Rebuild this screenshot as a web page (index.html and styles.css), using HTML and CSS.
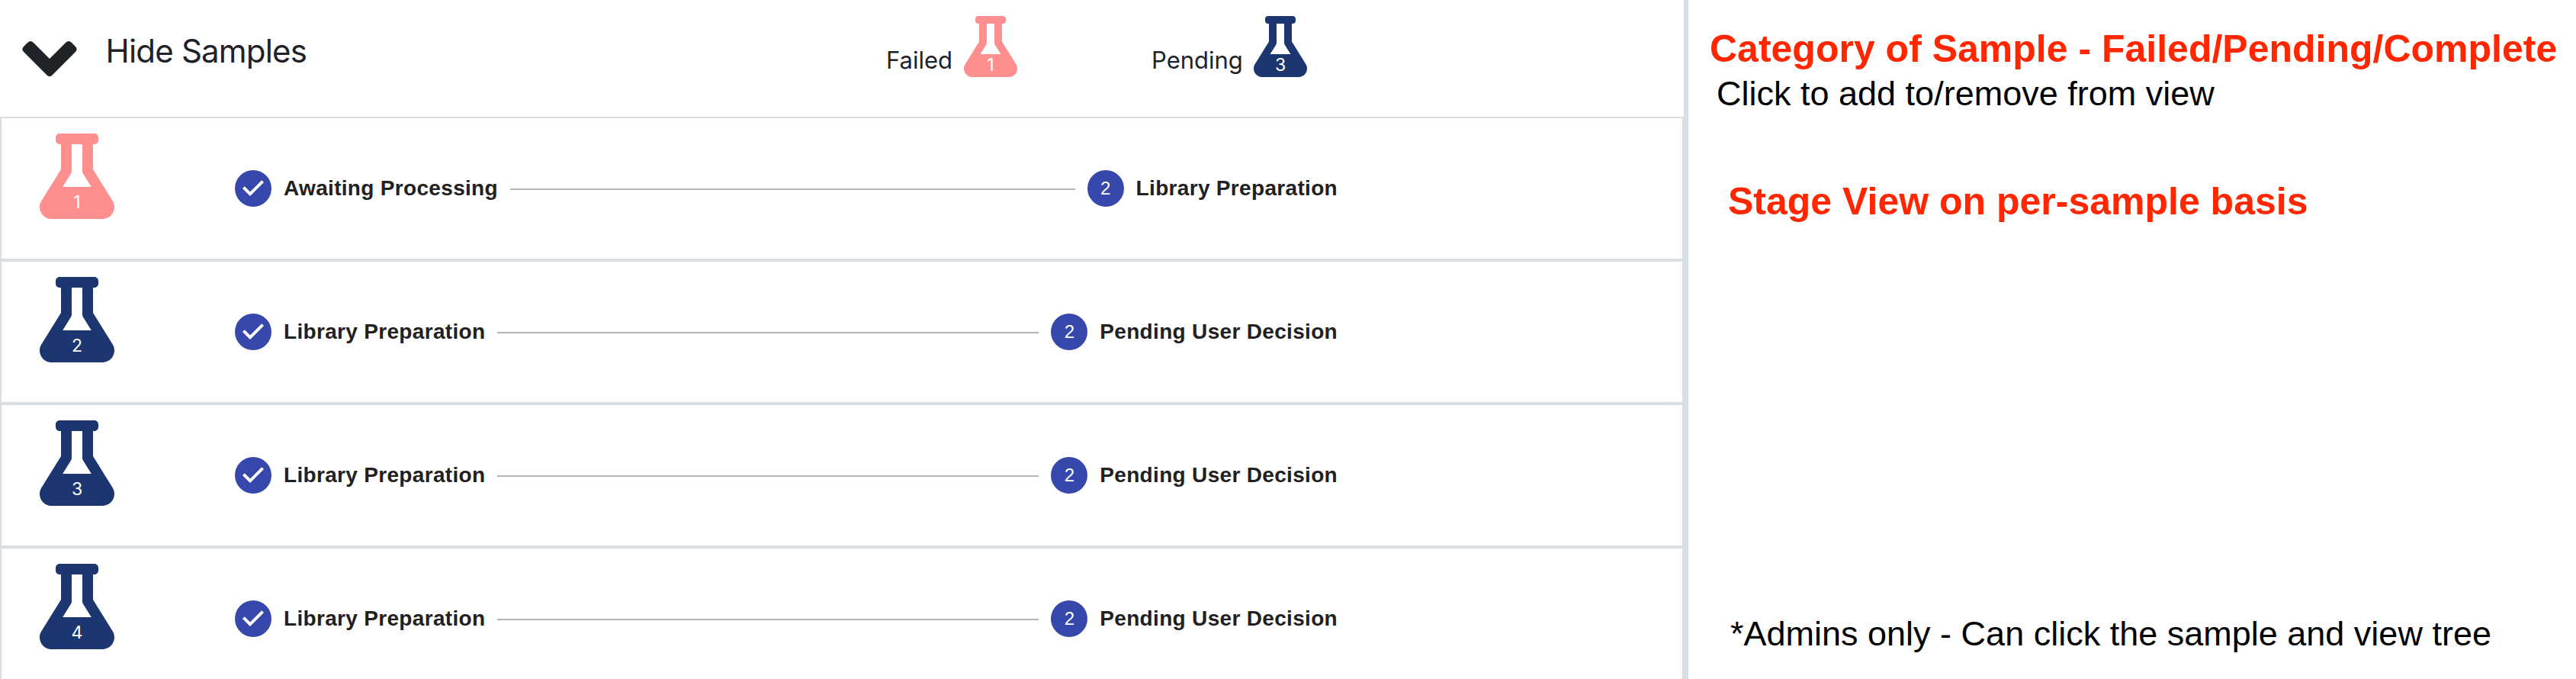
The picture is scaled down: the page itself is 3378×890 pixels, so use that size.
FILE: index.html
```html
<!DOCTYPE html>
<html lang="en">
<head>
<meta charset="utf-8">
<title>Samples</title>
<link rel="stylesheet" href="styles.css">
</head>
<body>
<svg class="defs" aria-hidden="true">
  <symbol id="flask" viewBox="0 0 448 512"><path d="M437.2 403.5L320 215V64h8c13.3 0 24-10.7 24-24V24c0-13.3-10.7-24-24-24H120c-13.3 0-24 10.7-24 24v16c0 13.3 10.7 24 24 24h8v151L10.8 403.5C-18.5 450.6 15.3 512 70.9 512h306.2c55.7 0 89.4-61.5 60.1-108.5zM137.9 320l48.2-77.6c3.7-5.2 5.8-11.6 5.8-18.4V64h64v160c0 6.9 2.2 13.2 5.8 18.4l48.2 77.6h-172z"/></symbol>
  <symbol id="check" viewBox="0 0 24 24"><path d="M12 0a12 12 0 1 0 0 24 12 12 0 0 0 0-24zm-2 17l-5-5 1.4-1.4 3.6 3.6 7.6-7.6L19 8l-9 9z"/></symbol>
</svg>
<div class="page">
  <main class="panel">
    <header class="header">
      <div class="toggle">
        <svg class="chevron" viewBox="0 0 70 46"><path d="M1.5 14.5Q-2.5 10.5 1.5 6.5L6 2Q10 -2 14 2L35 23L56 2Q60 -2 64 2L68.5 6.5Q72.5 10.5 68.5 14.5L38.5 44.5Q35 48 31.5 44.5Z"/></svg>
        <span class="title">Hide Samples</span>
      </div>
      <div class="status"><span class="status-name">Failed</span><span class="flask small failed"><svg><use href="#flask"/></svg><span class="count">1</span></span></div>
      <div class="status"><span class="status-name">Pending</span><span class="flask small pending"><svg><use href="#flask"/></svg><span class="count">3</span></span></div>
    </header>
    <section class="row">
      <span class="flask failed"><svg><use href="#flask"/></svg><span class="count">1</span></span>
      <div class="stepper"><svg class="done"><use href="#check"/></svg><span class="label">Awaiting Processing</span><i class="line"></i><span class="number">2</span><span class="label">Library Preparation</span></div>
    </section>
    <section class="row">
      <span class="flask pending"><svg><use href="#flask"/></svg><span class="count">2</span></span>
      <div class="stepper"><svg class="done"><use href="#check"/></svg><span class="label">Library Preparation</span><i class="line"></i><span class="number">2</span><span class="label">Pending User Decision</span></div>
    </section>
    <section class="row">
      <span class="flask pending"><svg><use href="#flask"/></svg><span class="count">3</span></span>
      <div class="stepper"><svg class="done"><use href="#check"/></svg><span class="label">Library Preparation</span><i class="line"></i><span class="number">2</span><span class="label">Pending User Decision</span></div>
    </section>
    <section class="row">
      <span class="flask pending"><svg><use href="#flask"/></svg><span class="count">4</span></span>
      <div class="stepper"><svg class="done"><use href="#check"/></svg><span class="label">Library Preparation</span><i class="line"></i><span class="number">2</span><span class="label">Pending User Decision</span></div>
    </section>
  </main>
  <aside class="notes">
    <h2 class="category">Category of Sample - Failed/Pending/Complete</h2>
    <p class="hint">Click to add to/remove from view</p>
    <h2 class="stage">Stage View on per-sample basis</h2>
    <p class="admins">*Admins only - Can click the sample and view tree</p>
  </aside>
</div>
</body>
</html>
```
FILE: styles.css
```css
* { box-sizing: border-box; }
html, body { height: 890px; overflow: hidden; }
body { margin: 0; background: #fff; color: #1f2327; font-family: Inter, sans-serif; }
svg { display: block; flex: none; }
.defs { position: absolute; width: 0; height: 0; }
.page { display: flex; width: 3378px; height: 890px; overflow: hidden; }

.panel { flex: none; width: 2214px; height: 890px; overflow: hidden; border-right: 6px solid #d8dee2; }
.header { display: flex; height: 153px; }
.toggle { display: flex; width: 1162px; padding: 42px 0 0 30px; }
.chevron { width: 70px; height: 46px; margin-top: 12px; overflow: visible; fill: #1f2327; }
.title { margin-left: 38.5px; font-size: 42px; line-height: 50px; letter-spacing: -0.8px; white-space: nowrap; }
.status { display: flex; width: 348px; padding-top: 21px; }
.status-name { width: 102px; margin-top: 39px; font-size: 31px; line-height: 38px; }
.status + .status .status-name { width: 134px; }

.flask { display: grid; flex: none; width: 98px; height: 112px; justify-items: center; }
.flask svg { width: 98px; height: 112px; }
.flask svg, .flask .count { grid-area: 1 / 1; }
.flask .count { align-self: end; margin-bottom: 8px; color: #fff; font-size: 23px; line-height: 28px; }
.flask.small, .flask.small svg { width: 70px; height: 80px; }
.flask.small .count { margin-bottom: 2px; }
.failed { fill: #ff8e8e; }
.pending { fill: #1c366f; }

.row { display: flex; height: 188px; padding: 20px 0 0 50px; border: 2px solid #d8dee2; }
.stepper { display: flex; align-items: center; width: 1446px; height: 48px; margin: 48px 0 0 158px; }
.done { width: 48px; height: 48px; fill: #3748ac; }
.number { width: 48px; height: 48px; border-radius: 50%; background: #3748ac; color: #fff; font: 24px/48px "Liberation Sans", sans-serif; text-align: center; }
.label { margin-left: 16px; color: #212121; font: bold 28px/40px "Liberation Sans", sans-serif; letter-spacing: 0.32px; white-space: nowrap; }
.line { flex: 1; height: 2px; margin: 2px 16px 0; background: #b3b3b3; }

.notes { display: flex; flex-direction: column; padding-top: 36px; color: #000; font-family: "Liberation Sans", sans-serif; white-space: nowrap; }
.notes h2 { margin: 0; color: #ff2600; font-size: 50px; line-height: 56px; }
.notes p { margin: 0; font-size: 45px; line-height: 50px; }
.notes .category { margin-left: 28px; }
.notes .hint { margin: 6px 0 0 37px; }
.notes .stage { margin: 88px 0 0 52px; }
.notes .admins { margin: 514px 0 0 55px; }
```
